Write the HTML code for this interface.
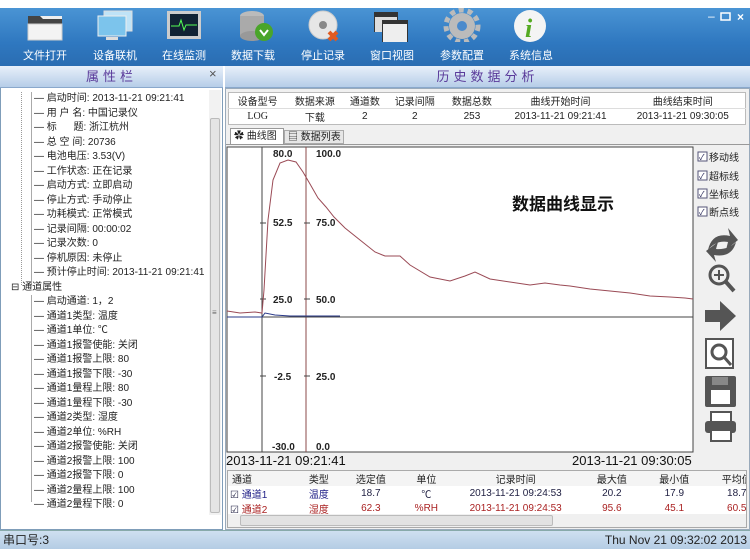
<!DOCTYPE html>
<html><head><meta charset="utf-8"><style>
*{margin:0;padding:0;box-sizing:border-box}
body{width:750px;height:560px;background:#fff;font-family:"Liberation Sans","Noto Sans CJK SC",sans-serif;position:relative;overflow:hidden;font-size:11px;color:#222}
.a{position:absolute}
.tb{left:0;top:8px;width:750px;height:58px;background:linear-gradient(#4a94d4,#2f78c0 60%,#2a6db2);}
.tl{color:#fff;font-size:11px;width:70px;text-align:center;top:40px}
.hd{top:66px;height:22px;background:linear-gradient(#e8f0fa,#b6cde8);border-bottom:1px solid #8aa8cc;font-size:13px;color:#5a3a9a;letter-spacing:4px;text-align:center;line-height:22px}
.lp{left:0;top:88px;width:223px;height:442px;background:#fff;border:1px solid #7f9db9;border-top:none}
.li{font-size:10px;height:14.5px;line-height:14.5px;white-space:nowrap}
.rp{left:225px;top:88px;width:525px;height:442px;background:#f0f0f0;border:1px solid #9ab}
table{border-collapse:collapse}
td{text-align:center;font-size:10px}
.sb{top:530px;left:0;width:750px;height:19px;background:linear-gradient(#cfe0f0,#b4cce4);border-top:1px solid #8aa;font-size:12px;line-height:18px}
.ic{background:#666;border-radius:2px}
</style></head><body>
<div class="a tb"></div>
<!-- toolbar icons -->
<svg class="a" style="left:0;top:8px" width="750" height="34">
<g transform="translate(28,4)"><rect x="0" y="4" width="34" height="24" fill="#eee"/><path d="M0 4h12l3 3h19v5H0z" fill="#444"/><rect x="0" y="12" width="34" height="16" fill="#f3f3f3" stroke="#ccc"/></g>
<g transform="translate(96,3)"><rect x="8" y="0" width="28" height="20" fill="#bfe3f7" stroke="#ddd"/><rect x="2" y="5" width="28" height="20" fill="#7cc4ec" stroke="#eee"/><rect x="10" y="26" width="12" height="3" fill="#ddd"/></g>
<g transform="translate(167,3)"><rect x="0" y="0" width="34" height="28" fill="#ccc"/><rect x="3" y="3" width="28" height="22" fill="#123"/><path d="M4 15h8l2-6 3 10 2-5h11" stroke="#5f5" fill="none"/></g>
<g transform="translate(238,2)"><ellipse cx="14" cy="6" rx="12" ry="5" fill="#bbb"/><rect x="2" y="6" width="24" height="20" fill="#aaa"/><ellipse cx="14" cy="26" rx="12" ry="5" fill="#999"/><circle cx="26" cy="22" r="9" fill="#4aa52a"/><path d="M22 20l4 5 4-5" stroke="#fff" stroke-width="2" fill="none"/></g>
<g transform="translate(307,2)"><circle cx="16" cy="15" r="14" fill="#e6e6e6" stroke="#ccc"/><circle cx="16" cy="15" r="4" fill="#888"/><path d="M22 22l8 8M30 22l-8 8" stroke="#e05a20" stroke-width="4"/></g>
<g transform="translate(374,4)"><rect x="0" y="0" width="24" height="20" fill="#333"/><rect x="1" y="5" width="22" height="15" fill="#ddd"/><rect x="8" y="8" width="26" height="22" fill="#333"/><rect x="9" y="12" width="24" height="18" fill="#eee"/></g>
<g transform="translate(446,2)"><circle cx="16" cy="16" r="13" fill="#bbb"/><circle cx="16" cy="16" r="16" fill="none" stroke="#bbb" stroke-width="5" stroke-dasharray="5 4"/><circle cx="16" cy="16" r="5" fill="#4a8acc"/></g>
<g transform="translate(514,2)"><circle cx="16" cy="16" r="16" fill="#f4f4f4"/><text x="11" y="27" font-size="26" font-style="italic" font-weight="bold" fill="#55aa22" font-family="Liberation Serif">i</text></g>
<text x="708" y="12" fill="#fff" font-size="12">–</text><rect x="721" y="5" width="9" height="7" fill="none" stroke="#fff" stroke-width="1.5"/><text x="737" y="13" fill="#fff" font-size="12" font-weight="bold">×</text>
</svg>
<div class="a tl" style="left:10px;top:47px">文件打开</div>
<div class="a tl" style="left:80px;top:47px">设备联机</div>
<div class="a tl" style="left:149px;top:47px">在线监测</div>
<div class="a tl" style="left:218px;top:47px">数据下载</div>
<div class="a tl" style="left:288px;top:47px">停止记录</div>
<div class="a tl" style="left:357px;top:47px">窗口视图</div>
<div class="a tl" style="left:427px;top:47px">参数配置</div>
<div class="a tl" style="left:496px;top:47px">系统信息</div>

<div class="a hd" style="left:0;width:223px">属性栏</div>
<div class="a" style="left:209px;top:66px;color:#555;font-size:13px">×</div>
<div class="a hd" style="left:225px;width:525px">历史数据分析</div>

<div class="a lp">
<div class="a" style="left:20px;top:4px;height:193px;border-left:1px dotted #999"></div>
<div class="a" style="left:30px;top:4px;height:193px;border-left:1px solid #aaa"></div>
<div class="a" style="left:30px;top:207px;height:207px;border-left:1px solid #aaa"></div>
<div class="a" style="left:33px;top:4px">
<div class="li">— 启动时间: 2013-11-21 09:21:41</div>
<div class="li">— 用 户 名: 中国记录仪</div>
<div class="li">— 标&nbsp;&nbsp;&nbsp;&nbsp;&nbsp;&nbsp;题: 浙江杭州</div>
<div class="li">— 总 空 间: 20736</div>
<div class="li">— 电池电压: 3.53(V)</div>
<div class="li">— 工作状态: 正在记录</div>
<div class="li">— 启动方式: 立即启动</div>
<div class="li">— 停止方式: 手动停止</div>
<div class="li">— 功耗模式: 正常模式</div>
<div class="li">— 记录间隔: 00:00:02</div>
<div class="li">— 记录次数: 0</div>
<div class="li">— 停机原因: 未停止</div>
<div class="li">— 预计停止时间: 2013-11-21 09:21:41</div>
</div>
<div class="a li" style="left:10px;top:193px">⊟ 通道属性</div>
<div class="a" style="left:33px;top:207px">
<div class="li">— 启动通道: 1，2</div>
<div class="li">— 通道1类型: 温度</div>
<div class="li">— 通道1单位: ℃</div>
<div class="li">— 通道1报警使能: 关闭</div>
<div class="li">— 通道1报警上限: 80</div>
<div class="li">— 通道1报警下限: -30</div>
<div class="li">— 通道1量程上限: 80</div>
<div class="li">— 通道1量程下限: -30</div>
<div class="li">— 通道2类型: 湿度</div>
<div class="li">— 通道2单位: %RH</div>
<div class="li">— 通道2报警使能: 关闭</div>
<div class="li">— 通道2报警上限: 100</div>
<div class="li">— 通道2报警下限: 0</div>
<div class="li">— 通道2量程上限: 100</div>
<div class="li">— 通道2量程下限: 0</div>
</div>
<div class="a" style="left:208px;top:2px;width:12px;height:425px;background:#f2f2f2"></div>
<div class="a" style="left:209px;top:30px;width:10px;height:395px;background:#e4e4e4;border:1px solid #bbb;border-radius:2px"></div>
<div class="a" style="left:211px;top:220px;font-size:8px;color:#666">≡</div>
</div>

<div class="a rp">
<table class="a" style="left:2px;top:3px;width:518px;background:#fff;border:1px solid #bbb">
<tr style="height:16px"><td>设备型号</td><td>数据来源</td><td>通道数</td><td>记录间隔</td><td>数据总数</td><td style="width:120px">曲线开始时间</td><td style="width:125px">曲线结束时间</td></tr>
<tr style="height:15px;border-top:1px solid #ddd"><td style="font-family:Liberation Serif">LOG</td><td>下载</td><td>2</td><td>2</td><td>253</td><td>2013-11-21 09:21:41</td><td>2013-11-21 09:30:05</td></tr>
</table>
<div class="a" style="left:4px;top:39px;width:54px;height:16px;background:#fff;border:1px solid #999;border-bottom:none;font-size:10px;line-height:15px;padding-left:3px">✿ 曲线图</div>
<div class="a" style="left:58px;top:41px;width:60px;height:14px;background:#e6e6e6;border:1px solid #aaa;font-size:10px;line-height:13px;padding-left:3px">▤ 数据列表</div>
<div class="a" style="left:0;top:55px;width:525px;height:1px;background:#999"></div>
</div>

<svg class="a" style="left:0;top:0" width="750" height="560">
<rect x="227" y="147" width="466" height="305" fill="#fff" stroke="#444"/>
<line x1="262" y1="147" x2="262" y2="452" stroke="#444"/>
<line x1="306" y1="147" x2="306" y2="452" stroke="#8b4a4a"/>
<line x1="227" y1="317" x2="693" y2="317" stroke="#444"/>
<g stroke="#444"><line x1="260" y1="223" x2="266" y2="223"/><line x1="260" y1="299" x2="266" y2="299"/><line x1="260" y1="376" x2="266" y2="376"/><line x1="304" y1="223" x2="310" y2="223"/><line x1="304" y1="299" x2="310" y2="299"/><line x1="304" y1="376" x2="310" y2="376"/></g>
<g font-size="10" font-weight="bold" fill="#222" font-family="Liberation Sans">
<text x="273" y="157">80.0</text><text x="316" y="157">100.0</text>
<text x="273" y="226">52.5</text><text x="316" y="226">75.0</text>
<text x="273" y="303">25.0</text><text x="316" y="303">50.0</text>
<text x="274" y="380">-2.5</text><text x="316" y="380">25.0</text>
<text x="272" y="450">-30.0</text><text x="316" y="450">0.0</text></g>
<path d="M227 311 L240 313 L255 312 L262 313 L264 290 L268 220 L273 180 L280 163 L288 160 L296 162 L303 172 L310 184 L318 198 L326 207 L334 217 L345 228 L360 240 L375 252 L385 256 L400 256 L410 265 L430 277 L450 281 L465 276 L475 272 L490 279 L510 282 L530 285 L545 283 L560 285 L570 286 L590 289 L610 291 L630 293 L650 296 L670 297 L685 298 L693 299" fill="none" stroke="#9a4a55" stroke-width="1"/>
<path d="M227 317 L262 317 L265 313 L275 315 L290 316 L340 316" fill="none" stroke="#2a3a8a" stroke-width="1"/>
<text x="512" y="210" font-size="17" font-weight="bold" fill="#111" font-family="Liberation Sans,Noto Sans CJK SC,sans-serif">数据曲线显示</text>
<g font-size="10" fill="#222" font-family="Liberation Sans,Noto Sans CJK SC,sans-serif">
<rect x="698" y="152" width="9" height="9" fill="#fff" stroke="#557"/><text x="699" y="160" font-size="8" fill="#225">✓</text><text x="709" y="161">移动线</text>
<rect x="698" y="171" width="9" height="9" fill="#fff" stroke="#557"/><text x="699" y="179" font-size="8" fill="#225">✓</text><text x="709" y="180">超标线</text>
<rect x="698" y="189" width="9" height="9" fill="#fff" stroke="#557"/><text x="699" y="197" font-size="8" fill="#225">✓</text><text x="709" y="198">坐标线</text>
<rect x="698" y="207" width="9" height="9" fill="#fff" stroke="#557"/><text x="699" y="215" font-size="8" fill="#225">✓</text><text x="709" y="216">断点线</text></g>
<g fill="#555" stroke="#555">
<path d="M708 250 Q712 232 730 236 L728 228 L738 240 L726 250 L728 242 Q716 240 708 250Z M736 242 Q732 258 714 255 L716 262 L706 251 L718 242 L716 249 Q728 250 736 242Z" stroke="none"/>
<circle cx="719" cy="275" r="9" fill="none" stroke-width="3"/><line x1="726" y1="282" x2="734" y2="291" stroke-width="4"/><path d="M714 275h10M719 270v10" stroke-width="2"/>
<path d="M705 310h15v-9l16 15-16 15v-9h-15z" stroke="none"/>
<rect x="706" y="339" width="27" height="29" fill="#fff" stroke-width="2"/><circle cx="719" cy="352" r="7" fill="none" stroke-width="3"/><line x1="724" y1="357" x2="731" y2="365" stroke-width="3"/>
<rect x="705" y="376" width="31" height="31" rx="2" stroke="none"/><rect x="711" y="390" width="19" height="14" fill="#fff" stroke="none"/><rect x="712" y="377" width="16" height="8" fill="#888" stroke="none"/>
<rect x="711" y="412" width="20" height="10" fill="#fff" stroke-width="2"/><rect x="705" y="421" width="31" height="12" rx="3" stroke="none"/><rect x="711" y="430" width="20" height="11" fill="#fff" stroke-width="2"/></g>
<g font-size="13" fill="#111" font-family="Liberation Sans"><text x="226" y="465">2013-11-21 09:21:41</text><text x="572" y="465">2013-11-21 09:30:05</text></g>
</svg>

<div class="a" style="left:227px;top:470px;width:520px;height:58px;background:#fff;border:1px solid #aaa;overflow:hidden">
<table style="width:540px;font-size:10px">
<tr style="height:15px;background:#f4f4f4"><td style="text-align:left;padding-left:4px;width:70px">通道</td><td>类型</td><td>选定值</td><td>单位</td><td style="width:130px">记录时间</td><td>最大值</td><td>最小值</td><td>平均值</td></tr>
<tr style="height:13px;color:#224"><td style="text-align:left;padding-left:2px">☑ <span style="color:#228">通道1</span></td><td style="color:#228">温度</td><td>18.7</td><td>℃</td><td>2013-11-21 09:24:53</td><td>20.2</td><td>17.9</td><td>18.7</td></tr>
<tr style="height:13px;color:#a22"><td style="text-align:left;padding-left:2px"><span style="color:#224">☑</span> 通道2</td><td>湿度</td><td>62.3</td><td>%RH</td><td>2013-11-21 09:24:53</td><td>95.6</td><td>45.1</td><td>60.5</td></tr>
</table>
<div class="a" style="left:0;top:43px;width:520px;height:13px;background:#f0f0f0"><div class="a" style="left:12px;top:1px;width:313px;height:11px;background:#e2e2e2;border:1px solid #bbb;border-radius:2px"></div></div>
</div>

<div class="a sb"><span style="padding-left:3px">串口号:3</span><span style="position:absolute;right:3px">Thu Nov 21 09:32:02 2013</span></div>
</body></html>
